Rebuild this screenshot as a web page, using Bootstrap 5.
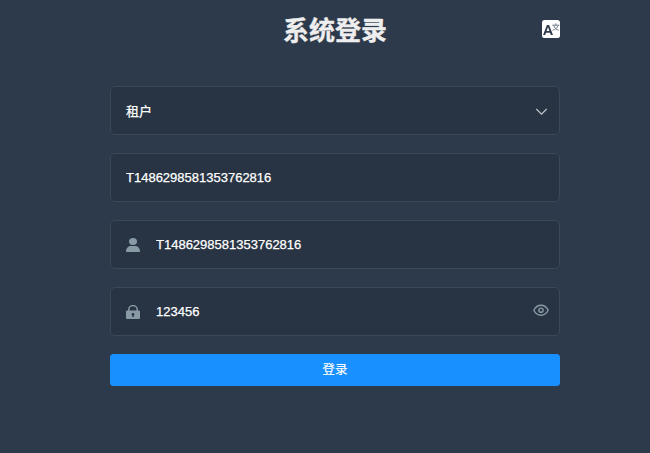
<!DOCTYPE html>
<html lang="zh-CN">
<head>
<meta charset="utf-8">
<meta name="viewport" content="width=device-width, initial-scale=1">
<title>系统登录</title>
<link href="https://cdn.jsdelivr.net/npm/bootstrap@5.3.0/dist/css/bootstrap.min.css" rel="stylesheet">
<style>
body{background:#2d3a4b;font-family:"Liberation Sans","Noto Sans CJK SC",sans-serif;font-size:13px;min-height:100vh;overflow:hidden}
.login-form{width:450px;margin-left:110px;padding-top:10px}
.login-head{height:40px;margin-bottom:36px;display:grid;grid-template-columns:18px 1fr 18px}
.login-title{font-size:26px;line-height:38px;padding-top:2px;color:#eee;-webkit-text-stroke:.3px #eee}
.lang-icon{margin-bottom:2px}
.login-fields{gap:18px}
.login-field{height:49px;background:#283443;border:1px solid #3b4856;border-radius:5px;padding:0 10px 0 15px}
.login-field .form-control{color:#fff;font-size:13px;line-height:20px;height:47px;-webkit-text-stroke:.25px #fff}
.icon-slot{width:30px;flex:none}
.login-btn{height:32px;font-size:12.5px;line-height:31px;background:#1890ff;border-color:#1890ff;border-radius:3px;color:#fff;-webkit-text-stroke:.15px #fff}
svg{display:block;flex:none}
</style>
</head>
<body>
<form class="login-form">
  <div class="login-head align-items-center">
    <span></span>
    <h1 class="login-title fw-bold text-center m-0">系统登录</h1>
    <svg class="lang-icon" width="18" height="18" viewBox="0 0 18 18" role="img" aria-label="语言">
      <rect width="18" height="18" rx="2.500" fill="#fff"/>
      <path fill="#2d3a4b" fill-rule="evenodd" d="M1.100 15 4.900 4.900h2.200L11 15H8.800L8 12.700H4L3.200 15ZM4.600 11h2.800L6 7Z"/>
      <path d="M10.300 5.200h7M13.800 3.400v1.800M11.700 5.400c.7 2.400 2.500 4 5 4.900M16 5.400c-.7 2.400-2.500 4-5.400 4.900" fill="none" stroke="#526071" stroke-width=".8"/>
    </svg>
  </div>
  <div class="login-fields d-flex flex-column">
    <div class="login-field d-flex align-items-center">
      <input class="form-control bg-transparent border-0 shadow-none p-0" type="text" value="租户" readonly aria-label="类型">
      <svg width="15" height="14" viewBox="0 0 15 14"><path d="m2.300 5 5.200 5.200L12.700 5" fill="none" stroke="#c0c4cc" stroke-width="1.200"/></svg>
    </div>
    <div class="login-field d-flex align-items-center">
      <input class="form-control bg-transparent border-0 shadow-none p-0" type="text" value="T1486298581353762816" aria-label="租户">
    </div>
    <div class="login-field d-flex align-items-center">
      <span class="icon-slot"><svg width="14" height="14" viewBox="0 0 14 14" fill="#889aa4"><ellipse cx="7" cy="3.500" rx="4" ry="3.500"/><path d="M0 13.200C0 10 2.400 8 5 8h4c2.600 0 5 2 5 5.200 0 .5-.3.8-.8.8H.8c-.5 0-.8-.3-.8-.8Z"/></svg></span>
      <input class="form-control bg-transparent border-0 shadow-none p-0" type="text" value="T1486298581353762816" aria-label="账号">
    </div>
    <div class="login-field d-flex align-items-center">
      <span class="icon-slot"><svg width="14" height="14" viewBox="0 0 14 14"><path d="M2.800 7V4.500a4.200 3.900 0 0 1 8.400 0V7" fill="none" stroke="#889aa4" stroke-width="1.500"/><path fill="#889aa4" fill-rule="evenodd" d="M1.300 5.500h11.400c.8 0 1.300.5 1.300 1.200v6c0 .8-.5 1.300-1.300 1.300H1.300C.5 14 0 13.500 0 12.700v-6c0-.7.5-1.200 1.300-1.200ZM7 7.900a1.500 1.400 0 0 0-.7 2.600V12h1.400v-1.500A1.500 1.400 0 0 0 7 7.900Z"/></svg></span>
      <input class="form-control bg-transparent border-0 shadow-none p-0" type="text" value="123456" aria-label="密码">
      <svg width="16" height="16" viewBox="0 0 16 16" fill="none" stroke="#889aa4" stroke-width="1.400"><path d="M.8 6.200C2.400 3.100 5 1.200 8 1.200s5.600 1.900 7.200 5c-1.600 3.100-4.200 5-7.200 5s-5.600-1.900-7.200-5Z"/><circle cx="8" cy="6.200" r="2.100"/></svg>
    </div>
    <button type="button" class="login-btn btn w-100 p-0">登录</button>
  </div>
</form>
<script src="https://cdn.jsdelivr.net/npm/bootstrap@5.3.0/dist/js/bootstrap.bundle.min.js"></script>
</body>
</html>
